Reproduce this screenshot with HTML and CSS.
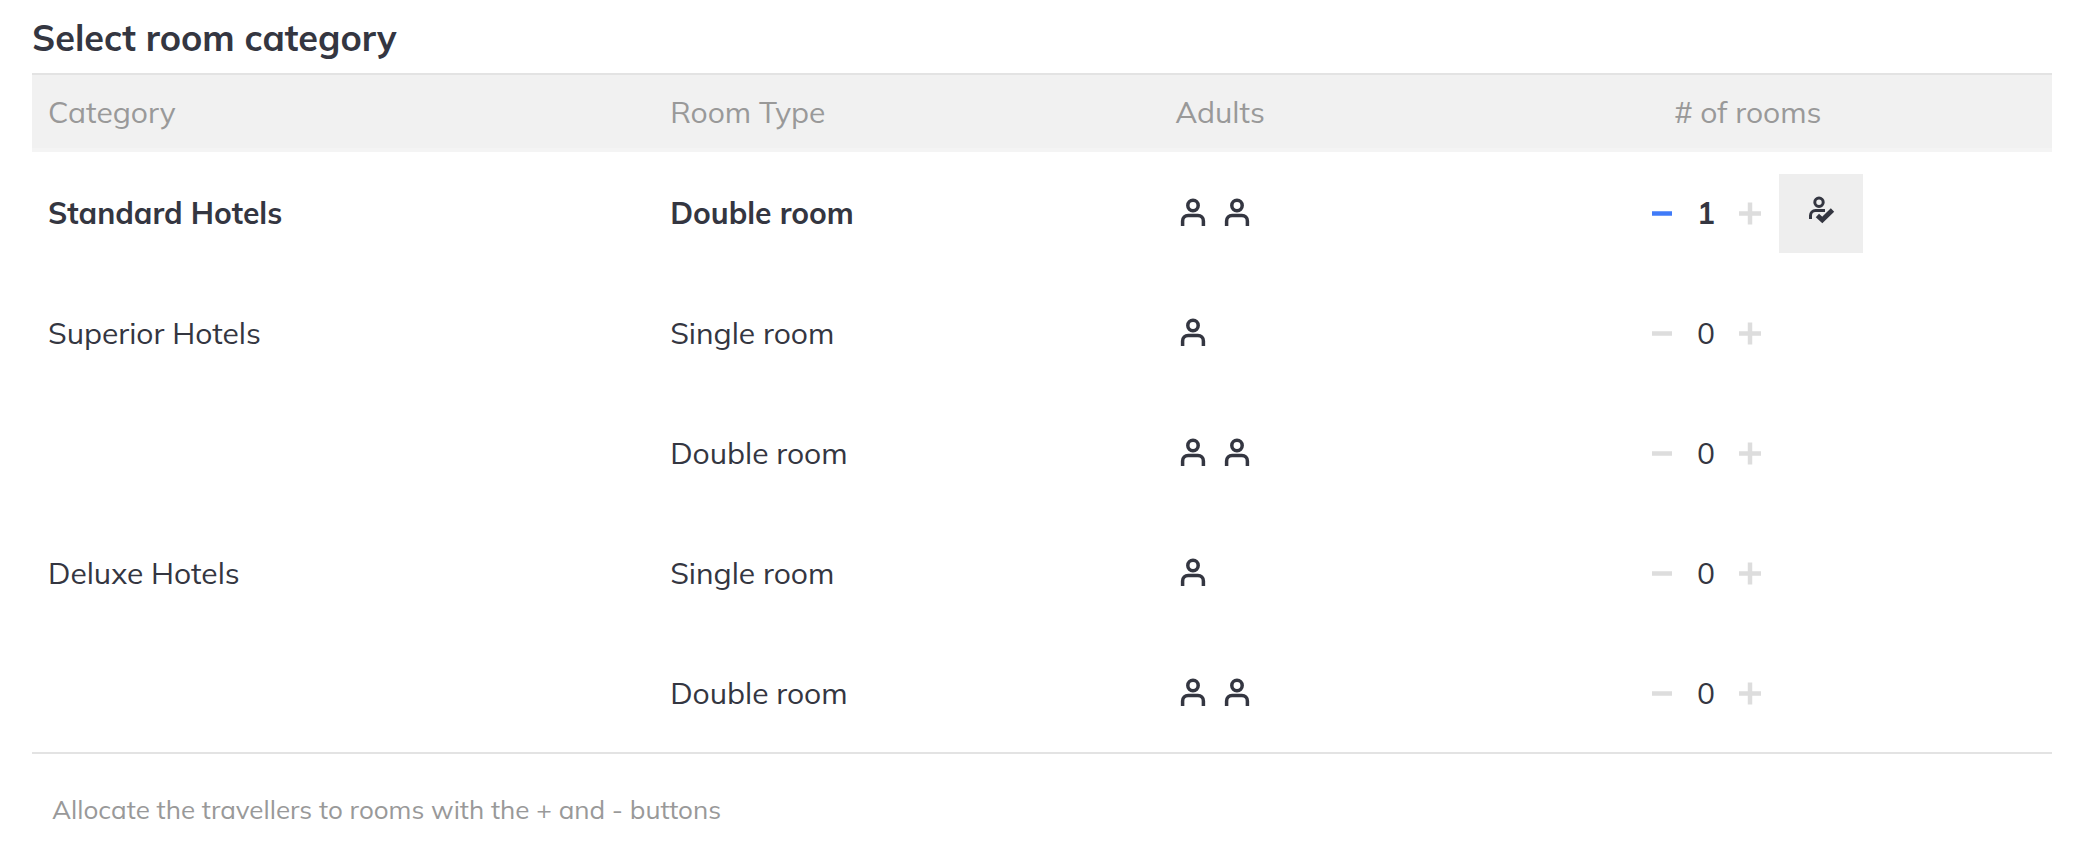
FILE: index.html
```
<!DOCTYPE html>
<html lang="en">
  <head>
    <meta charset="utf-8">
    <meta name="viewport" content="width=device-width,initial-scale=1.0">
    <title>Select room category</title>
    <link rel="stylesheet" href="styles.css">
  </head>
  <body>
    <!-- icons -->
    <svg class="sprite" aria-hidden="true">
      <symbol id="person" viewBox="0 0 36 36">
        <circle cx="18" cy="10.5" r="5.2"/>
        <path d="M7.6 31.1v-5.1a5.5 5.5 0 0 1 5.5-5.5h9.8a5.5 5.5 0 0 1 5.5 5.5v5.1"/>
      </symbol>
      <symbol id="person-check" viewBox="0 0 30 30">
        <circle cx="13" cy="7.2" r="4.2"/>
        <path d="M4.5 24v-3.5a5 5 0 0 1 5-5h9.5"/>
        <path class="tick" d="M11.4 20.4l4.9 4.6 10.2-10"/>
      </symbol>
      <symbol id="minus" viewBox="0 0 24 24">
        <path d="M2 12.5h20"/>
      </symbol>
      <symbol id="plus" viewBox="0 0 24 24">
        <path d="M1 12.5h22M12 1.5v22"/>
      </symbol>
    </svg>

    <div class="rooms">
      <h1 class="rooms-title">Select room category</h1>
      <table class="rooms-table">
        <colgroup>
          <col class="col-category">
          <col class="col-type">
          <col class="col-adults">
          <col class="col-count">
        </colgroup>
        <thead>
          <tr>
            <th>Category</th>
            <th>Room Type</th>
            <th>Adults</th>
            <th class="center"># of rooms</th>
          </tr>
        </thead>
        <tbody>
          <tr class="selected">
            <td>Standard Hotels</td>
            <td>Double room</td>
            <td>
              <div class="adults">
                <svg class="person"><use href="#person"/></svg>
                <svg class="person"><use href="#person"/></svg>
              </div>
            </td>
            <td>
              <div class="counter">
                <button type="button" class="step" aria-label="Remove room"><svg><use href="#minus"/></svg></button>
                <span class="count">1</span>
                <button type="button" class="step" aria-label="Add room" disabled><svg><use href="#plus"/></svg></button>
                <button type="button" class="assign" aria-label="Assign travellers"><svg><use href="#person-check"/></svg></button>
              </div>
            </td>
          </tr>
          <tr>
            <td>Superior Hotels</td>
            <td>Single room</td>
            <td>
              <div class="adults">
                <svg class="person"><use href="#person"/></svg>
              </div>
            </td>
            <td>
              <div class="counter">
                <button type="button" class="step" aria-label="Remove room" disabled><svg><use href="#minus"/></svg></button>
                <span class="count">0</span>
                <button type="button" class="step" aria-label="Add room" disabled><svg><use href="#plus"/></svg></button>
                <span class="assign-space"></span>
              </div>
            </td>
          </tr>
          <tr>
            <td></td>
            <td>Double room</td>
            <td>
              <div class="adults">
                <svg class="person"><use href="#person"/></svg>
                <svg class="person"><use href="#person"/></svg>
              </div>
            </td>
            <td>
              <div class="counter">
                <button type="button" class="step" aria-label="Remove room" disabled><svg><use href="#minus"/></svg></button>
                <span class="count">0</span>
                <button type="button" class="step" aria-label="Add room" disabled><svg><use href="#plus"/></svg></button>
                <span class="assign-space"></span>
              </div>
            </td>
          </tr>
          <tr>
            <td>Deluxe Hotels</td>
            <td>Single room</td>
            <td>
              <div class="adults">
                <svg class="person"><use href="#person"/></svg>
              </div>
            </td>
            <td>
              <div class="counter">
                <button type="button" class="step" aria-label="Remove room" disabled><svg><use href="#minus"/></svg></button>
                <span class="count">0</span>
                <button type="button" class="step" aria-label="Add room" disabled><svg><use href="#plus"/></svg></button>
                <span class="assign-space"></span>
              </div>
            </td>
          </tr>
          <tr>
            <td></td>
            <td>Double room</td>
            <td>
              <div class="adults">
                <svg class="person"><use href="#person"/></svg>
                <svg class="person"><use href="#person"/></svg>
              </div>
            </td>
            <td>
              <div class="counter">
                <button type="button" class="step" aria-label="Remove room" disabled><svg><use href="#minus"/></svg></button>
                <span class="count">0</span>
                <button type="button" class="step" aria-label="Add room" disabled><svg><use href="#plus"/></svg></button>
                <span class="assign-space"></span>
              </div>
            </td>
          </tr>
        </tbody>
      </table>
      <p class="rooms-hint">Allocate the travellers to rooms with the + and - buttons</p>
    </div>
  </body>
</html>
```
FILE: styles.css
```
body {
  margin: 0;
  background-color: #fff;
  color: #343641;
  font-family: Mulish, Muli, "Noto Sans", sans-serif;
  font-size: 30px;
  line-height: 40px;
}
svg {
  display: block;
  fill: none;
  stroke: currentColor;
}
.sprite {
  position: absolute;
  width: 0;
  height: 0;
}

.rooms {
  padding: 13px 26px 0 32px;
}
.rooms-title {
  margin: 0;
  padding-bottom: 10px;
  font-size: 36px;
  line-height: 50px;
  font-weight: 700;
}

/* table */

.rooms-table {
  width: 100%;
  table-layout: fixed;
  border-collapse: separate;
  border-spacing: 0;
  border-top: 2px solid #e3e3e3;
  border-bottom: 2px solid #e3e3e3;
}
.col-category {
  width: 30.8%;
}
.col-type {
  width: 25%;
}
.col-adults {
  width: 14.1%;
}
.rooms-table th,
.rooms-table td {
  padding: 0 16px;
  text-align: left;
}
.rooms-table th {
  height: 73px;
  background-color: #f1f1f1;
  border-bottom: 4px solid #f4f4f4;
  color: #999;
  font-weight: 400;
}
.rooms-table .center {
  text-align: center;
}
.rooms-table td {
  height: 118px;
  padding-top: 2px;
}
.selected {
  font-weight: 700;
}

.adults {
  display: flex;
  gap: 8px;
}
.person {
  width: 36px;
  height: 36px;
  stroke-width: 3.5;
}

/* room counter */

.counter {
  display: flex;
  align-items: center;
  justify-content: center;
}
.counter button {
  display: flex;
  align-items: center;
  justify-content: center;
  border: 0;
  cursor: pointer;
}
.step {
  width: 58px;
  height: 60px;
  padding: 0;
  background: none;
  color: #407bf8;
}
.step svg {
  width: 24px;
  height: 24px;
  stroke-width: 4.5;
  overflow: visible;
}
.counter .step:disabled {
  color: #ddd;
  cursor: default;
}
.count {
  width: 30px;
  text-align: center;
}
.assign {
  width: 84px;
  height: 79px;
  padding: 0 0 6px;
  background-color: #eee;
  color: #343641;
}
.assign svg {
  width: 30px;
  height: 30px;
  stroke-width: 3;
}
.tick {
  stroke-width: 4.8;
}
.assign-space {
  width: 84px;
}

.rooms-hint {
  margin: 0;
  padding: 36px 20px;
  color: #999;
  font-size: 26px;
}
```
